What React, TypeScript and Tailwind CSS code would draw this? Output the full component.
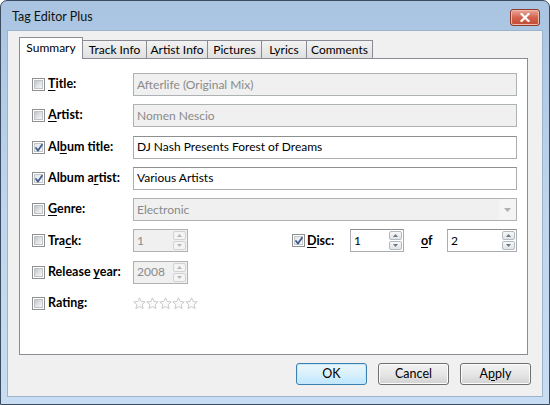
import React from "react";

const F = "font-['Lato',sans-serif]";

function Check({ checked }: { checked?: boolean }) {
  return (
    <span className="relative flex h-[13px] w-[13px] shrink-0 border border-[#8e8f8f] bg-white p-[1px]">
      <span
        className={
          checked
            ? "flex-1 border border-[#c3c7cc] bg-gradient-to-br from-[#e2e5e9] to-[#fbfbfb]"
            : "flex-1 border border-[#bfc3c8] bg-gradient-to-br from-[#bfc3c8] via-[#dfe1e3] to-[#f7f7f7]"
        }
      />
      {checked && (
        <svg className="absolute left-[1px] top-[1px]" width="10" height="10" viewBox="0 0 10 10">
          <path d="M2 5 L4 7.6 L8 1.8" fill="none" stroke="#3f5c8f" strokeWidth="1.8" strokeLinecap="round" strokeLinejoin="round" />
        </svg>
      )}
    </span>
  );
}

function Label({ children, checked }: { children: React.ReactNode; checked?: boolean }) {
  return (
    <div className="flex w-[101px] shrink-0 items-center">
      <Check checked={checked} />
      <span className="ml-[3px] text-[12.5px] font-bold text-black">{children}</span>
    </div>
  );
}

function U({ children }: { children: React.ReactNode }) {
  return <span className="underline decoration-1 underline-offset-2">{children}</span>;
}

function TextBox({ value, disabled }: { value: string; disabled?: boolean }) {
  return (
    <div
      className={
        "flex h-[23px] flex-1 items-center border px-[3px] text-[12px] " +
        (disabled
          ? "border-[#adb2b5] bg-[#f0f0f0] text-[#8a8a8a]"
          : "border-[#abadb3] border-t-[#8e8f8f] bg-white text-black")
      }
    >
      {value}
    </div>
  );
}

function Arrow({ up, disabled }: { up?: boolean; disabled?: boolean }) {
  return (
    <svg width="5" height="3" viewBox="0 0 5 3">
      <path d={up ? "M0 3 L2.5 0 L5 3 Z" : "M0 0 L2.5 3 L5 0 Z"} fill={disabled ? "#b6b6b6" : "#6b7786"} />
    </svg>
  );
}

function Spin({ value, w, disabled }: { value: string; w: string; disabled?: boolean }) {
  return (
    <div
      className={
        "flex h-[23px] items-stretch border text-[12px] " +
        w +
        " " +
        (disabled
          ? "border-[#adb2b5] bg-[#f0f0f0] text-[#8a8a8a]"
          : "border-[#abadb3] border-t-[#8e8f8f] bg-white text-black")
      }
    >
      <span className="flex flex-1 items-center pl-[3px]">{value}</span>
      <div className="my-[1px] mr-[1px] flex w-[13px] flex-col gap-[1px]">
        <div
          className={
            "flex flex-1 items-center justify-center rounded-[2px] border " +
            (disabled ? "border-[#d2d2d2] bg-[#f4f4f4]" : "border-[#b4bac2] bg-gradient-to-b from-[#f7f7f7] to-[#e0e3e7]")
          }
        >
          <Arrow up disabled={disabled} />
        </div>
        <div
          className={
            "flex flex-1 items-center justify-center rounded-[2px] border " +
            (disabled ? "border-[#d2d2d2] bg-[#f4f4f4]" : "border-[#b4bac2] bg-gradient-to-b from-[#f7f7f7] to-[#e0e3e7]")
          }
        >
          <Arrow disabled={disabled} />
        </div>
      </div>
    </div>
  );
}

function Star() {
  return (
    <svg width="13" height="13" viewBox="0 0 13 13">
      <path
        d="M6.5 0.8 L8.2 4.5 L12.2 4.9 L9.2 7.6 L10.1 11.6 L6.5 9.5 L2.9 11.6 L3.8 7.6 L0.8 4.9 L4.8 4.5 Z"
        fill="#fbfbfb"
        stroke="#c9c9c9"
        strokeWidth="1"
        strokeLinejoin="round"
      />
    </svg>
  );
}

function Btn({ children, def }: { children: React.ReactNode; def?: boolean }) {
  return (
    <div
      className={
        "flex h-[22px] w-[71px] items-center justify-center rounded-[3px] border text-[12.5px] text-black " +
        (def
          ? "border-[#3c7fb1] bg-gradient-to-b from-[#eaf6fd] via-[#d9f0fc] to-[#bee6fd] shadow-[inset_0_0_0_1px_#c6e8fa]"
          : "border-[#707070] bg-gradient-to-b from-[#f2f2f2] via-[#e6e6e6] to-[#d2d2d2] shadow-[inset_0_0_0_1px_#fcfcfc]")
      }
    >
      {children}
    </div>
  );
}

function Tab({ children, sel, w }: { children: React.ReactNode; sel?: boolean; w: string }) {
  return (
    <div
      className={
        "-ml-px flex items-center justify-center border border-[#898c95] text-[12px] text-black " +
        w +
        " " +
        (sel
          ? "relative z-10 h-[22px] border-b-0 bg-white pb-[2px]"
          : "h-[19px] bg-gradient-to-b from-[#f2f2f2] to-[#e0e0e0]")
      }
    >
      {children}
    </div>
  );
}

export default function App() {
  return (
    <div className={"h-[405px] w-[550px] bg-white " + F}>
      <div className="flex h-[405px] w-[550px] flex-col rounded-t-[7px] border border-[#3b4b60] bg-gradient-to-b from-[#a9c4e1] via-[#bed5ed] to-[#c8ddf2]">
        {/* title bar */}
        <div className="flex h-[29px] shrink-0 items-start justify-between pl-[11px] pr-[9px]">
          <span className="mt-[7px] text-[12.5px] text-[#111]">Tag Editor Plus</span>
          <div className="mt-[8px] flex h-[17px] w-[30px] items-center justify-center rounded-[3px] border border-[#8c3a2e] bg-gradient-to-b from-[#e9a99b] via-[#d3624e] to-[#c24a33] shadow-[inset_0_0_0_1px_#efb9ab]">
            <svg width="10" height="9" viewBox="0 0 10 9">
              <path d="M1.5 1 L8.5 8 M8.5 1 L1.5 8" stroke="white" strokeWidth="2.2" strokeLinecap="square" />
            </svg>
          </div>
        </div>
        {/* client */}
        <div className="mx-[6px] flex h-[367px] flex-col border border-[#9cb3cd] bg-[#f0f0f0]">
          <div className="relative z-10 -mb-px flex items-end pl-[11px] pt-[6px]">
            <div className="ml-px flex items-end">
              <Tab sel w="w-[64px]">Summary</Tab>
              <Tab w="w-[65px]">Track Info</Tab>
              <Tab w="w-[62px]">Artist Info</Tab>
              <Tab w="w-[55px]">Pictures</Tab>
              <Tab w="w-[46px]">Lyrics</Tab>
              <Tab w="w-[67px]">Comments</Tab>
            </div>
          </div>
          <div className="ml-[11px] flex h-[297px] w-[509px] flex-col gap-[8.3px] border border-[#898c95] bg-white pl-[12px] pr-[10px] pt-[14px]">
            <div className="flex h-[23px] items-center">
              <Label>
                <U>T</U>itle:
              </Label>
              <TextBox value="Afterlife (Original Mix)" disabled />
            </div>
            <div className="flex h-[23px] items-center">
              <Label>
                <U>A</U>rtist:
              </Label>
              <TextBox value="Nomen Nescio" disabled />
            </div>
            <div className="flex h-[23px] items-center">
              <Label checked>
                Al<U>b</U>um title:
              </Label>
              <TextBox value="DJ Nash Presents Forest of Dreams" />
            </div>
            <div className="flex h-[23px] items-center">
              <Label checked>
                Album a<U>r</U>tist:
              </Label>
              <TextBox value="Various Artists" />
            </div>
            <div className="flex h-[23px] items-center">
              <Label>
                <U>G</U>enre:
              </Label>
              <div className="flex h-[23px] flex-1 items-stretch border border-[#adb2b5] bg-[#f0f0f0] text-[12px] text-[#8a8a8a]">
                <span className="flex flex-1 items-center pl-[3px]">Electronic</span>
                <span className="flex w-[17px] items-center justify-center bg-[#f4f4f4]">
                  <svg width="7" height="4" viewBox="0 0 7 4">
                    <path d="M0 0 L3.5 4 L7 0 Z" fill="#b0b0b0" />
                  </svg>
                </span>
              </div>
            </div>
            <div className="flex h-[23px] items-center">
              <Label>
                Tra<U>c</U>k:
              </Label>
              <Spin value="1" w="w-[55px]" disabled />
              <div className="ml-[104px] flex items-center">
                <Check checked />
                <span className="ml-[2px] w-[43px] text-[12.5px] font-bold text-black">
                  <U>D</U>isc:
                </span>
              </div>
              <Spin value="1" w="w-[54px]" />
              <span className="ml-[17px] w-[26px] text-[12.5px] font-bold text-black">
                <U>o</U>f
              </span>
              <Spin value="2" w="w-[70px]" />
            </div>
            <div className="flex h-[23px] items-center">
              <Label>
                Release <U>y</U>ear:
              </Label>
              <Spin value="2008" w="w-[55px]" disabled />
            </div>
            <div className="flex h-[23px] items-center">
              <Label>Rating:</Label>
              <div className="flex">
                <Star />
                <Star />
                <Star />
                <Star />
                <Star />
              </div>
            </div>
          </div>
          <div className="flex justify-end gap-[11px] pr-[11px] pt-[8px]">
            <Btn def>OK</Btn>
            <Btn>Cancel</Btn>
            <Btn>
              A<U>p</U>ply
            </Btn>
          </div>
        </div>
      </div>
    </div>
  );
}
